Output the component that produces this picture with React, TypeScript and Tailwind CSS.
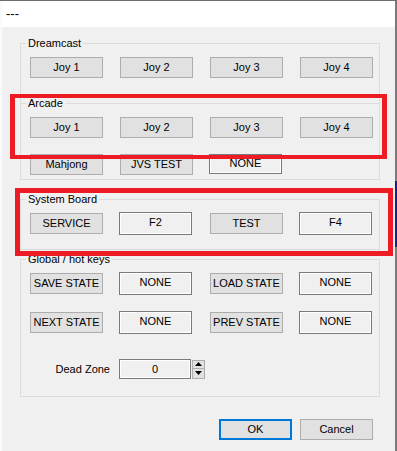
import React from "react";

const font = { fontFamily: '"Liberation Sans", Arial, sans-serif' };

const Btn = ({ label }: { label: string }) => (
    <div className="w-[73px] h-[21px] flex items-center justify-center bg-[#e1e1e1] border border-[#adadad] text-[11px] text-black">
        {label}
    </div>
);

const KeyBox = ({ label, tall = true }: { label: string; tall?: boolean }) => (
    <div
        className={`-ml-[1px] mr-[1px] w-[73px] ${tall ? "h-[23px]" : "h-[20px]"} flex items-center justify-center pb-[2px] bg-[#f0f0f0] border border-[#7a7a7a] shadow-[inset_0_0_0_1px_#ffffff] text-[11px] text-black`}
    >
        {label}
    </div>
);

const Label = ({ text }: { text: string }) => (
    <span className="absolute left-[5px] -top-[8px] px-[2px] leading-[14px] text-[11px] text-black bg-[#f0f0f0]">
        {text}
    </span>
);

const Row = ({ children, className = "" }: { children: React.ReactNode; className?: string }) => (
    <div className={`flex items-center gap-[17px] pl-[9px] ${className}`}>{children}</div>
);

export default function App() {
    return (
        <div className="relative w-[397px] h-[451px] flex flex-col bg-white overflow-hidden" style={font}>
            <div className="h-[1px] bg-[#6e6e6e]" />
            <div className="flex flex-1">
                <div className="w-[2px] bg-[#fafafa]" />
                <div className="flex-1 flex flex-col">
                    {/* title bar */}
                    <div className="h-[26px] bg-white flex items-center pl-[4px] text-[13px] text-black">---</div>

                    {/* body */}
                    <div className="flex-1 bg-[#f0f0f0] flex flex-col pt-[16px] pl-[18px]">
                        <div className="relative w-[360px] border-t border-x border-[#dcdcdc] pt-[13px] pb-[25px]">
                            <Label text="Dreamcast" />
                            <Row className="h-[21px]">
                                <Btn label="Joy 1" />
                                <Btn label="Joy 2" />
                                <Btn label="Joy 3" />
                                <Btn label="Joy 4" />
                            </Row>
                        </div>

                        <div className="relative w-[360px] border border-[#dcdcdc] pt-[13px] pb-[4px]">
                            <Label text="Arcade" />
                            <Row className="h-[21px]">
                                <Btn label="Joy 1" />
                                <Btn label="Joy 2" />
                                <Btn label="Joy 3" />
                                <Btn label="Joy 4" />
                            </Row>
                            <Row className="h-[21px] mt-[16px] items-start">
                                <Btn label="Mahjong" />
                                <Btn label="JVS TEST" />
                                <KeyBox label="NONE" tall={false} />
                            </Row>
                        </div>

                        <div className="relative w-[360px] mt-[19px] border border-[#dcdcdc] pt-[12px] pb-[15px]">
                            <Label text="System Board" />
                            <Row className="h-[22px]">
                                <Btn label="SERVICE" />
                                <KeyBox label="F2" />
                                <Btn label="TEST" />
                                <KeyBox label="F4" />
                            </Row>
                        </div>

                        <div className="relative w-[360px] mt-[9px] border border-[#dcdcdc] pt-[12px] pb-[17px]">
                            <Label text="Global / hot keys" />
                            <Row className="h-[22px]">
                                <Btn label="SAVE STATE" />
                                <KeyBox label="NONE" />
                                <Btn label="LOAD STATE" />
                                <KeyBox label="NONE" />
                            </Row>
                            <Row className="h-[22px] mt-[17px]">
                                <Btn label="NEXT STATE" />
                                <KeyBox label="NONE" />
                                <Btn label="PREV STATE" />
                                <KeyBox label="NONE" />
                            </Row>
                            <div className="flex items-center pl-[9px] mt-[26px] h-[20px]">
                                <span className="w-[80px] text-right text-[11px] text-black">Dead Zone</span>
                                <div className="ml-[9px] w-[72px] h-[20px] flex items-center justify-center bg-[#f0f0f0] border border-[#7a7a7a] shadow-[inset_0_0_0_1px_#ffffff] text-[11px] text-black">
                                    0
                                </div>
                                <div className="ml-[1px] w-[13px] h-[19px] flex flex-col">
                                    <div className="h-[9px] flex items-center justify-center bg-[#e1e1e1] border border-[#adadad]">
                                        <svg width="7" height="4" viewBox="0 0 7 4">
                                            <path d="M0 4 L3.5 0 L7 4 Z" fill="#000" />
                                        </svg>
                                    </div>
                                    <div className="h-[10px] flex items-center justify-center bg-[#e1e1e1] border border-t-0 border-[#adadad]">
                                        <svg width="7" height="4" viewBox="0 0 7 4">
                                            <path d="M0 0 L7 0 L3.5 4 Z" fill="#000" />
                                        </svg>
                                    </div>
                                </div>
                            </div>
                        </div>

                        <div className="flex justify-end gap-[8px] pr-[22px] mt-[22px]">
                            <div className="w-[73px] h-[21px] flex items-center justify-center bg-[#e1e1e1] border-2 border-[#0078d7] text-[11px] text-black">
                                OK
                            </div>
                            <div className="w-[73px] h-[21px] flex items-center justify-center bg-[#e1e1e1] border border-[#adadad] text-[11px] text-black">
                                Cancel
                            </div>
                        </div>
                    </div>
                </div>
                <div className="w-[2px] flex flex-col">
                    <div className="h-[180px] bg-[#7a7a7a]" />
                    <div className="h-[66px] bg-[#1c1c9a]" />
                    <div className="flex-1 bg-[#7a7a7a]" />
                </div>
            </div>

            {/* red annotation frames */}
            <div className="absolute left-[10px] top-[94px] w-[377px] h-[65px] border-y-[4px] border-x-[5px] border-[#ed1c24]" />
            <div className="absolute left-[15px] top-[188px] w-[378px] h-[68px] border-[5px] border-[#ed1c24]" />
        </div>
    );
}
